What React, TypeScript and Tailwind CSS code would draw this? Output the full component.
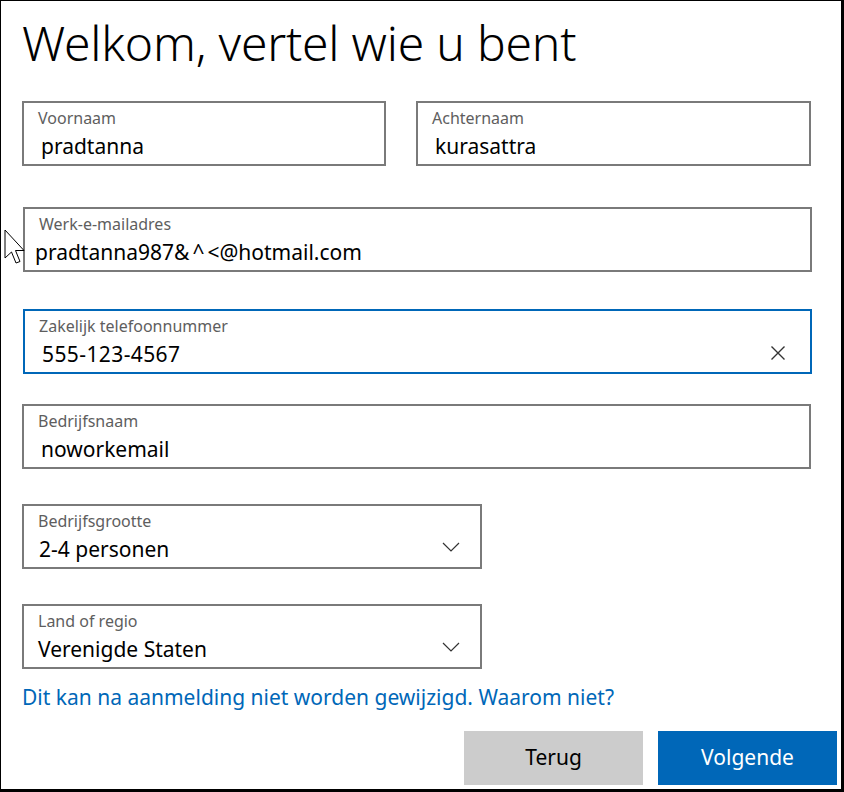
import React from "react";

const font = { fontFamily: '"Noto Sans", "Open Sans", sans-serif' };

function Field({
  label,
  value,
  className = "",
  focused = false,
  clear = false,
  chevron = false,
  valueClass = "pl-[17px]",
}: {
  label: string;
  value: React.ReactNode;
  className?: string;
  focused?: boolean;
  clear?: boolean;
  chevron?: boolean;
  valueClass?: string;
}) {
  return (
    <div
      className={`relative h-[65px] border-2 ${focused ? "border-[#0067b8]" : "border-[#7a7a7a]"} bg-white flex flex-col ${className}`}
    >
      <div className="pl-[14px] pt-[4px] text-[16px] leading-[22px] text-[#5e5e5e]">{label}</div>
      <div className={`${valueClass} mt-[3px] text-[21px] leading-[28px] text-black`}>{value}</div>
      {clear && (
        <svg className="absolute right-[24px] top-[34px]" width="16" height="16" viewBox="0 0 16 16">
          <path d="M1.5 1.5 L14.5 14.5 M14.5 1.5 L1.5 14.5" stroke="#333" strokeWidth="1.4" fill="none" />
        </svg>
      )}
      {chevron && (
        <svg className="absolute right-[20px] top-[36px]" width="18" height="10" viewBox="0 0 18 10">
          <path d="M1 1 L9 9 L17 1" stroke="#333" strokeWidth="1.2" fill="none" />
        </svg>
      )}
    </div>
  );
}

export default function App() {
  return (
    <div
      style={font}
      className="relative w-[844px] h-[792px] bg-white border-t border-l border-black border-r-[3px] border-b-[3px] overflow-hidden"
    >
      <div className="flex flex-col pl-[21px]">
        <h1 className="mt-[12px] text-[48px] leading-[60px] font-light text-black tracking-[-0.2px]">
          Welkom, vertel wie u bent
        </h1>
        <div className="mt-[28px] flex">
          <Field label="Voornaam" value="pradtanna" className="w-[364px]" />
          <Field label="Achternaam" value="kurasattra" className="ml-[30px] w-[395px]" />
        </div>
        <Field
          label="Werk-e-mailadres"
          value={
            <>
              pradtanna987&amp;<span className="px-[3px]">^</span>&lt;@hotmail.com
            </>
          }
          className="mt-[41px] w-[789px] ml-[1px]"
          valueClass="pl-[10px]"
        />
        <Field
          label="Zakelijk telefoonnummer"
          value={<span className="tracking-[0.4px]">555-123-4567</span>}
          className="mt-[37px] w-[789px] ml-[1px]"
          focused
          clear
        />
        <Field label="Bedrijfsnaam" value="noworkemail" className="mt-[30px] w-[789px]" />
        <Field label="Bedrijfsgrootte" value="2-4 personen" className="mt-[35px] w-[460px]" chevron valueClass="pl-[15px]" />
        <Field label="Land of regio" value="Verenigde Staten" className="mt-[35px] w-[460px]" chevron valueClass="pl-[14px]" />
        <a className="mt-[14px] text-[21px] leading-[28px] text-[#0067b8] cursor-pointer">
          Dit kan na aanmelding niet worden gewijzigd. Waarom niet?
        </a>
        <div className="mt-[20px] flex justify-end pr-[4px] gap-[15px]">
          <button className="w-[179px] h-[54px] bg-[#cccccc] text-black text-[21px]">Terug</button>
          <button className="w-[179px] h-[54px] bg-[#0067b8] text-white text-[21px]">Volgende</button>
        </div>
      </div>
      <svg className="absolute left-[3px] top-[228px]" width="24" height="42" viewBox="0 0 24 42">
        <path
          d="M1 1 L1 29 L7.5 23 L12 34 L16 32.5 L11.5 21.5 L20 21.5 Z"
          fill="white"
          stroke="black"
          strokeWidth="1"
        />
      </svg>
    </div>
  );
}
